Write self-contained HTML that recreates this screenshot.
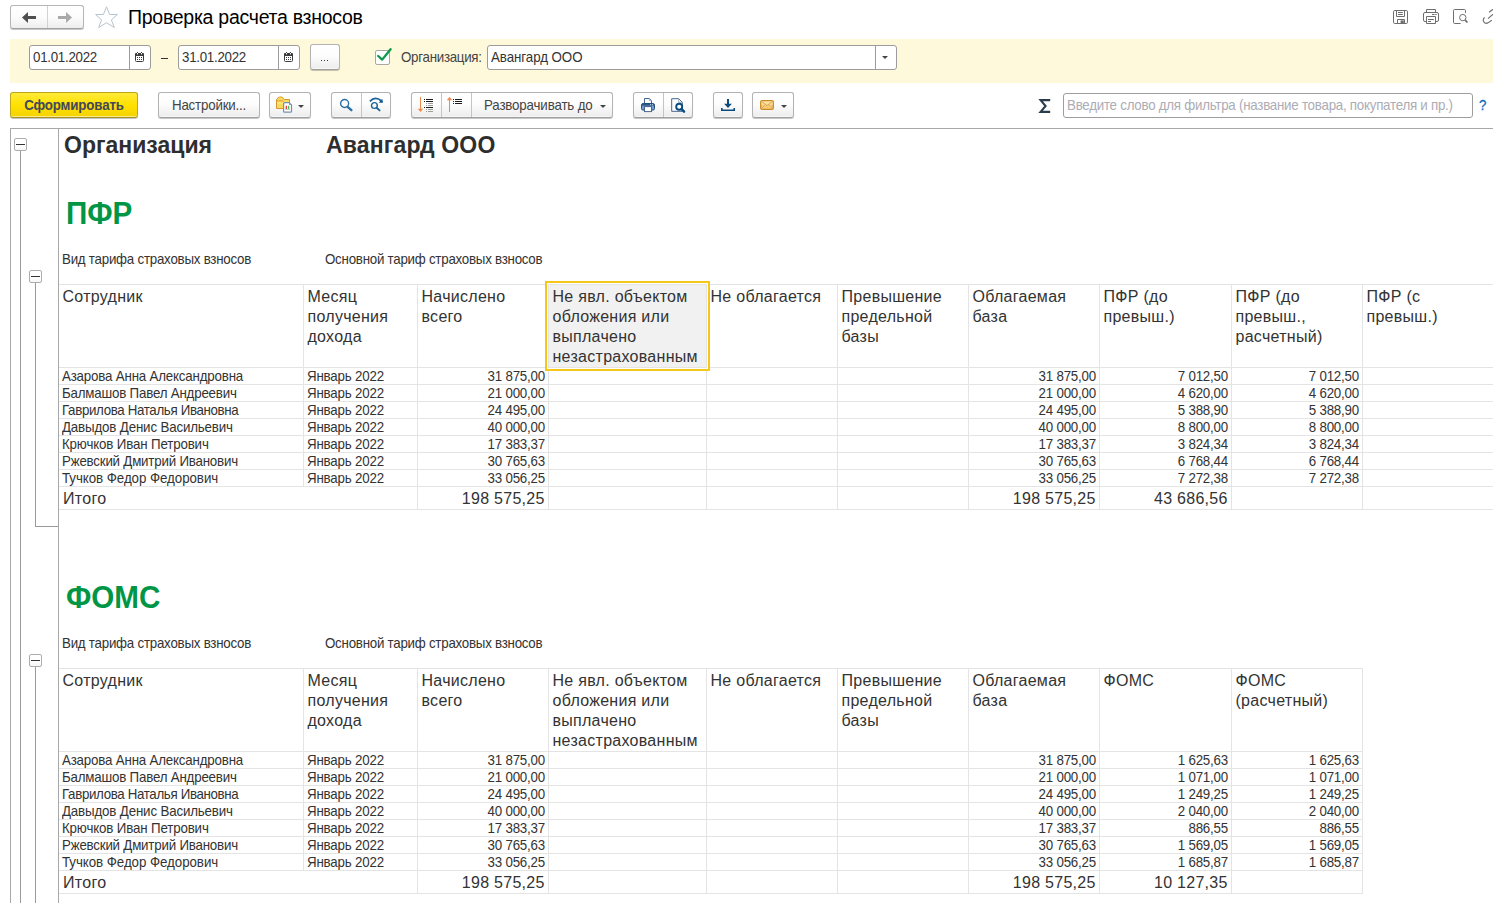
<!DOCTYPE html>
<html lang="ru"><head><meta charset="utf-8"><title>Проверка расчета взносов</title>
<style>

*{box-sizing:border-box}
html,body{margin:0;padding:0;background:#fff}
html{overflow:hidden;width:1493px;height:903px}
body{width:1493px;height:903px;overflow:hidden;position:relative;font-family:"Liberation Sans",sans-serif;font-size:13px;color:#333;}
.abs{position:absolute}
.t{position:absolute;white-space:nowrap;line-height:1}
.btn{position:absolute;top:92px;height:26px;border:1px solid #b3b3b3;border-bottom-color:#9f9f9f;border-radius:3px;background:linear-gradient(#ffffff 0%,#fdfdfd 45%,#ececec 100%);box-shadow:0 1px 0 rgba(0,0,0,.14),0 1px 1px rgba(0,0,0,.1),inset 0 -1px 0 rgba(255,255,255,.55)}
.btn .dv{position:absolute;top:0;bottom:0;width:1px;background:#c4c4c4}
.inp{position:absolute;border:1px solid #9c9c9c;border-radius:3px;background:#fff}
.inp .dv{position:absolute;top:0;bottom:0;width:1px;background:#9c9c9c}
.caret{position:absolute;width:0;height:0;border-left:3px solid transparent;border-right:3px solid transparent;border-top:3px solid #444}
.vl{position:absolute;width:1px;background:#e4e4e4}
.hl{position:absolute;height:1px;background:#e4e4e4}
.tl{position:absolute;background:#9a9a9a}
.box{position:absolute;width:13px;height:13px;border:1px solid #adadad;border-radius:2px;background:linear-gradient(#fff 55%,#f6f6f6)}
.box i{position:absolute;left:1px;top:5px;width:9px;height:1px;background:#333}
.h{position:absolute;font-size:16px;line-height:20px;letter-spacing:.28px;color:#333;white-space:nowrap}
.d{position:absolute;font-size:13.33px;line-height:13px;letter-spacing:-.2px;color:#333;white-space:nowrap;transform:scaleY(1.05);transform-origin:0 0}
.y{transform:scaleY(1.05);transform-origin:0 0}
.n{letter-spacing:-.17px}
.m{letter-spacing:-.22px}
.r{text-align:right}
.s{position:absolute;font-size:16px;line-height:16px;letter-spacing:.28px;color:#333;white-space:nowrap}
svg{position:absolute;overflow:visible}

</style></head><body>
<div class="abs" style="left:10px;top:5px;width:74px;height:24px;border:1px solid #b6b6b6;border-bottom-color:#a2a2a2;border-radius:3px;background:linear-gradient(#fff 0%,#fcfcfc 50%,#eeeeee 100%);box-shadow:0 1px 0 rgba(0,0,0,.14),0 1px 1px rgba(0,0,0,.1)"><div class="abs" style="left:36px;top:0;bottom:0;width:1px;background:#d2d2d2"></div></div>
<svg style="left:22px;top:12px" width="14" height="11" viewBox="0 0 14 11"><path d="M0 5.5 L6 0 L6 4 L14 4 L14 7 L6 7 L6 11 Z" fill="#4f4f4f"/></svg>
<svg style="left:58px;top:12px" width="14" height="11" viewBox="0 0 14 11"><path d="M14 5.5 L8 0 L8 4 L0 4 L0 7 L8 7 L8 11 Z" fill="#a9a9a9"/></svg>
<svg style="left:94px;top:6px" width="25" height="23" viewBox="0 0 25 23"><path d="M12.5 0.8 L15.6 8.5 L23.4 8.5 L17.4 13.9 L20.3 21.5 L12.5 16.7 L4.7 21.5 L7.6 13.9 L1.6 8.5 L9.4 8.5 Z" fill="#fff" stroke="#b9c3cb" stroke-width="1" stroke-linejoin="miter"/></svg>
<div class="t" style="left:128px;top:8px;font-size:19.5px;letter-spacing:-.27px;color:#000">Проверка расчета взносов</div>
<svg style="left:1393px;top:10px" width="15" height="14" viewBox="0 0 15 14" fill="none" stroke="#6e6e6e" stroke-width="1">
<path d="M1.8 0.5 H13.2 Q14.5 0.5 14.5 1.8 V12.2 Q14.5 13.5 13.2 13.5 H1.8 Q0.5 13.5 0.5 12.2 V1.8 Q0.5 0.5 1.8 0.5 Z"/>
<path d="M3.5 0.5 V6.5 H11.5 V0.5"/><path d="M5 2.5 H9.8 M5 4.5 H9.8"/>
<path d="M4.5 13.5 V9.5 H11.5 V13.5"/><rect x="7.6" y="10.4" width="3.2" height="2.8" fill="#6e6e6e" stroke="none"/></svg>
<svg style="left:1423px;top:9px" width="16" height="15" viewBox="0 0 16 15" fill="none" stroke="#6e6e6e" stroke-width="1">
<path d="M3.5 3.5 V0.5 H12.5 V3.5"/>
<path d="M3.5 12.5 H2 Q0.5 12.5 0.5 11 V5 Q0.5 3.5 2 3.5 H14 Q15.5 3.5 15.5 5 V11 Q15.5 12.5 14 12.5 H12.5"/>
<path d="M3.5 7.5 H12.5 V14.5 H3.5 Z"/><path d="M5 10.5 H10.8 M5 12.5 H8 M9 5.5 H11.6 M12.3 5.5 H13.7"/></svg>
<svg style="left:1453px;top:9px" width="16" height="15" viewBox="0 0 16 15" fill="none" stroke="#6e6e6e" stroke-width="1">
<path d="M12.5 3.9 V1.7 Q12.5 0.5 11.3 0.5 H1.7 Q0.5 0.5 0.5 1.7 V13.3 Q0.5 14.5 1.7 14.5 H7.6"/>
<circle cx="9.8" cy="8.6" r="3.2"/><path d="M12.2 11.2 L14.4 13.5" stroke-width="1.8"/></svg>
<svg style="left:1482px;top:9px;overflow:hidden" width="11" height="15" viewBox="0 0 11 15" fill="none" stroke="#6e6e6e" stroke-width="1.15">
<path d="M2.6 8.4 Q0.4 10.6 1.8 12.8 Q3.6 15.4 6.4 13.6 L9.8 11.2"/><path d="M6 9.6 L11 5.3"/><path d="M7.2 3.2 L11 0.2"/></svg>
<div class="abs" style="left:10px;top:39px;width:1483px;height:44px;background:#fff9db"></div>
<div class="inp" style="left:29px;top:45px;width:122px;height:25px"><div class="dv" style="left:99px"></div></div>
<div class="t y" style="left:33px;top:50px;font-size:13.33px;letter-spacing:-.27px;color:#333">01.01.2022</div>
<svg style="left:135px;top:52px" width="9" height="10" viewBox="0 0 9 10"><rect x="0.5" y="1.5" width="8" height="8" rx="1" fill="#fff" stroke="#3c3c3c" stroke-width="1"/><path d="M0 2.2 Q0 1 1.2 1 H7.8 Q9 1 9 2.2 V4 H0 Z" fill="#3c3c3c"/><rect x="2" y="0" width="1" height="1" fill="#3c3c3c"/><rect x="6" y="0" width="1" height="1" fill="#3c3c3c"/><rect x="2" y="1" width="1" height="1.4" fill="#fff"/><rect x="6" y="1" width="1" height="1.4" fill="#fff"/><g fill="#3c3c3c"><rect x="2" y="5" width="1" height="1"/><rect x="4" y="5" width="1" height="1"/><rect x="6" y="5" width="1" height="1"/><rect x="2" y="7" width="1" height="1"/><rect x="4" y="7" width="1" height="1"/><rect x="6" y="7" width="1" height="1"/></g></svg>
<div class="abs" style="left:161px;top:58px;width:7px;height:1px;background:#333"></div>
<div class="inp" style="left:178px;top:45px;width:122px;height:25px"><div class="dv" style="left:99px"></div></div>
<div class="t y" style="left:182px;top:50px;font-size:13.33px;letter-spacing:-.27px;color:#333">31.01.2022</div>
<svg style="left:284px;top:52px" width="9" height="10" viewBox="0 0 9 10"><rect x="0.5" y="1.5" width="8" height="8" rx="1" fill="#fff" stroke="#3c3c3c" stroke-width="1"/><path d="M0 2.2 Q0 1 1.2 1 H7.8 Q9 1 9 2.2 V4 H0 Z" fill="#3c3c3c"/><rect x="2" y="0" width="1" height="1" fill="#3c3c3c"/><rect x="6" y="0" width="1" height="1" fill="#3c3c3c"/><rect x="2" y="1" width="1" height="1.4" fill="#fff"/><rect x="6" y="1" width="1" height="1.4" fill="#fff"/><g fill="#3c3c3c"><rect x="2" y="5" width="1" height="1"/><rect x="4" y="5" width="1" height="1"/><rect x="6" y="5" width="1" height="1"/><rect x="2" y="7" width="1" height="1"/><rect x="4" y="7" width="1" height="1"/><rect x="6" y="7" width="1" height="1"/></g></svg>
<div class="abs" style="left:310px;top:44px;width:30px;height:26px;border:1px solid #b3b3b3;border-bottom-color:#9f9f9f;border-radius:3px;background:linear-gradient(#fff 0%,#fdfdfd 45%,#ececec 100%);box-shadow:0 1px 0 rgba(0,0,0,.14),0 1px 1px rgba(0,0,0,.1),inset 0 -1px 0 rgba(255,255,255,.55)"></div>
<div class="abs" style="left:321px;top:60px;width:1px;height:1px;background:#333;box-shadow:3px 0 0 #333,6px 0 0 #333"></div>
<div class="abs" style="left:375px;top:50px;width:15px;height:15px;border:1px solid #a9a9a9;border-radius:2px;background:#fff"></div>
<svg style="left:377px;top:48px" width="15" height="14" viewBox="0 0 15 14"><path d="M1.2 8 L5.2 11.6 L13.6 1.2" fill="none" stroke="#0a9a47" stroke-width="2.3" stroke-linecap="round" stroke-linejoin="round"/></svg>
<div class="t y" style="left:401px;top:50px;font-size:13.33px;color:#444;letter-spacing:-.28px">Организация:</div>
<div class="inp" style="left:487px;top:45px;width:410px;height:25px"><div class="dv" style="left:387px"></div></div>
<div class="t y" style="left:491px;top:50px;font-size:13.33px;letter-spacing:-.07px;color:#333">Авангард ООО</div>
<div class="caret" style="left:882px;top:56px"></div>
<div class="btn" style="left:10px;width:128px;border-color:#bda51c;border-bottom-color:#a8911a;background:linear-gradient(#ffea3a 0%,#ffe100 50%,#f4d200 100%)"></div>
<div class="t y" style="left:10px;width:128px;text-align:center;top:98px;font-size:13.33px;letter-spacing:-.15px;font-weight:700;color:#43475a">Сформировать</div>
<div class="btn" style="left:158px;width:102px"></div>
<div class="t y" style="left:158px;width:102px;text-align:center;top:98px;font-size:13.33px;letter-spacing:-.2px;color:#444">Настройки...</div>
<div class="btn" style="left:269px;width:42px"></div>
<svg style="left:276px;top:96px" width="17" height="17" viewBox="0 0 17 17">
<path d="M0.5 12.5 V3.8 L2.2 1.6 Q3.3 0.9 4.4 1 L5.8 1 Q6.9 1.3 7.5 2.6 L8.2 3.5 H13.5 V12.5 Z" fill="#fad95f" stroke="#d9972b" stroke-width="1"/>
<path d="M1.2 5.6 H7.2 V8.4 H1.2 Z" fill="#ffe878" opacity=".7"/>
<path d="M0.6 4.9 H7.4" stroke="#d9972b" stroke-width=".9" fill="none"/>
<path d="M8.6 6.6 H13.2 L15.5 8.9 V15.2 Q15.5 16.2 14.5 16.2 H8.6 Q7.6 16.2 7.6 15.2 V7.6 Q7.6 6.6 8.6 6.6 Z" fill="#fff" stroke="#7790a8" stroke-width="1.2"/>
<path d="M13.1 6.8 V9 H15.3 Z" fill="#7790a8"/>
<rect x="9.7" y="9.8" width="1.3" height="3.3" fill="#ef3b32"/><rect x="12" y="9.8" width="1.2" height="3.3" fill="#3dbb52"/><path d="M9 13.4 H14" stroke="#9a9a9a" stroke-width=".5"/></svg>
<div class="caret" style="left:298px;top:105px"></div>
<div class="btn" style="left:331px;width:60px"><div class="dv" style="left:29px"></div></div>
<svg style="left:339px;top:98px" width="14" height="14" viewBox="0 0 14 14" fill="none" stroke="#2a70a2"><circle cx="5.6" cy="5.5" r="4" stroke-width="1.4"/><path d="M8.6 8.8 L12.4 12.2" stroke-width="2.3" stroke-linecap="round"/></svg>
<svg style="left:369px;top:97px" width="16" height="16" viewBox="0 0 16 16" fill="none" stroke="#1b659b"><circle cx="5.4" cy="8.5" r="2.9" stroke-width="1.4"/><path d="M7.6 10.7 L10.6 13.4" stroke-width="1.9" stroke-linecap="round"/><path d="M0.9 4.4 Q6 -1.4 12.6 4" stroke-width="1.7"/><path d="M13.2 1.7 L14.1 5.8 L9.7 5.8 Z" fill="#0f5a92" stroke="none"/></svg>
<div class="btn" style="left:411px;width:202px"><div class="dv" style="left:29px"></div><div class="dv" style="left:59px"></div></div>
<svg style="left:417px;top:96px" width="17" height="17" viewBox="0 0 17 17"><rect x="3" y="1" width="1" height="13" fill="#f08a4b" shape-rendering="crispEdges"/><path d="M0.8 12.7 H6.2 L3.5 16.1 Z" fill="#f08a4b"/>
<g shape-rendering="crispEdges" fill="#1c1c1c"><rect x="7" y="3" width="1" height="1"/><rect x="9" y="3" width="7" height="1"/><rect x="7" y="5" width="1" height="1"/><rect x="9" y="5" width="7" height="1"/><rect x="7" y="11" width="1" height="1"/><rect x="9" y="11" width="7" height="1"/></g>
<g shape-rendering="crispEdges" fill="#9c9c9c"><rect x="9" y="7" width="1" height="1"/><rect x="11" y="7" width="5" height="1"/><rect x="9" y="9" width="1" height="1"/><rect x="11" y="9" width="5" height="1"/><rect x="9" y="13" width="1" height="1"/><rect x="11" y="13" width="5" height="1"/><rect x="9" y="15" width="1" height="1"/><rect x="11" y="15" width="5" height="1"/></g></svg>
<svg style="left:446px;top:96px" width="17" height="17" viewBox="0 0 17 17"><rect x="3" y="3" width="1" height="13" fill="#f08a4b" shape-rendering="crispEdges"/><path d="M0.8 4.2 H6.2 L3.5 0.8 Z" fill="#f08a4b"/>
<g shape-rendering="crispEdges" fill="#1c1c1c"><rect x="7" y="3" width="1" height="1"/><rect x="9" y="3" width="7" height="1"/><rect x="7" y="5" width="1" height="1"/><rect x="9" y="5" width="7" height="1"/><rect x="7" y="7" width="1" height="1"/><rect x="9" y="7" width="7" height="1"/></g></svg>
<div class="t y" style="left:484px;top:98px;font-size:13.33px;letter-spacing:-.16px;color:#444">Разворачивать до</div>
<div class="caret" style="left:600px;top:105px"></div>
<div class="btn" style="left:633px;width:60px"><div class="dv" style="left:29px"></div></div>
<svg style="left:640px;top:97px" width="16" height="16" viewBox="0 0 16 16"><path d="M4.5 6.5 V1.5 H9.3 L11.5 3.7 V6.5" fill="#fff" stroke="#46648a" stroke-width="1"/><path d="M9.3 1.5 V3.7 H11.5" fill="none" stroke="#8aa0bb" stroke-width=".8"/>
<rect x="1.5" y="6.5" width="13" height="6.6" rx="1.6" fill="#739dcd" stroke="#1f4e7c" stroke-width="1"/><rect x="2" y="7" width="12" height="1.7" fill="#2d5788"/><rect x="10.2" y="7.3" width=".9" height=".9" fill="#fff"/><rect x="12.1" y="7.3" width=".9" height=".9" fill="#fff"/>
<rect x="4.5" y="9.6" width="7" height="5" fill="#fff" stroke="#46648a" stroke-width="1"/></svg>
<svg style="left:670px;top:97px" width="16" height="16" viewBox="0 0 16 16"><path d="M1.7 1.7 H8.7 L12.3 5.3 V14.3 H1.7 Z" fill="#fff" stroke="#46648a" stroke-width="1"/><path d="M8.7 1.7 V5.3 H12.3" fill="none" stroke="#8aa0bb" stroke-width=".8"/><circle cx="9.2" cy="9.7" r="3" fill="#fff" stroke="#0a4c7f" stroke-width="1.9"/><path d="M11.5 12.1 L14.1 14.7" stroke="#0a4c7f" stroke-width="2.4" stroke-linecap="round"/></svg>
<div class="btn" style="left:713px;width:30px"></div>
<svg style="left:721px;top:98px" width="15" height="14" viewBox="0 0 15 14"><rect x="6" y="1" width="2" height="5.4" fill="#0a4a7c"/><path d="M3.1 5.8 H10.9 L7 10 Z" fill="#0a4a7c"/><path d="M0.85 10 V12.3 H13.25 V10" fill="none" stroke="#0a4a7c" stroke-width="1.6"/></svg>
<div class="btn" style="left:752px;width:42px"></div>
<svg style="left:760px;top:100px" width="14" height="10" viewBox="0 0 14 10"><rect x="0.7" y="0.7" width="12.6" height="8.6" rx="1.4" fill="#f5cb78" stroke="#c98a26" stroke-width="1.3"/><rect x="1.4" y="1.4" width="11.2" height="3.4" fill="#fbe3a6" opacity=".8"/><path d="M1.4 1.4 L7 5.6 L12.6 1.4" fill="none" stroke="#d9a04a" stroke-width=".9"/><path d="M1.4 8.6 L5.4 4.6 M12.6 8.6 L8.6 4.6" fill="none" stroke="#dba552" stroke-width=".8"/></svg>
<div class="caret" style="left:781px;top:105px"></div>
<svg style="left:1039px;top:99px" width="12" height="14" viewBox="0 0 12 14"><path d="M11.2 1.1 H1.6 L6.6 7 L1.6 12.9 H11.2" fill="none" stroke="#2b3d4d" stroke-width="2.1" stroke-linejoin="miter"/></svg>
<div class="inp" style="left:1063px;top:93px;width:410px;height:25px;border-color:#9d9d9d;border-radius:3px"></div>
<div class="t y" style="left:1067px;top:98px;font-size:13.33px;color:#acacb5;letter-spacing:-.25px">Введите слово для фильтра (название товара, покупателя и пр.)</div>
<div class="t y" style="left:1479px;top:98px;font-size:13.33px;font-weight:400;-webkit-text-stroke:.25px #0c6cbc;color:#0c6cbc">?</div>
<div class="tl" style="left:10px;top:128px;width:1483px;height:1px;background:#a8a8a8"></div>
<div class="tl" style="left:10px;top:128px;width:1px;height:775px;background:#a8a8a8"></div>
<div class="tl" style="left:58px;top:129px;width:1px;height:774px;background:#a8a8a8"></div>
<div class="tl" style="left:20px;top:151px;width:1px;height:752px"></div>
<div class="box" style="left:14px;top:138px"><i></i></div>
<div class="tl" style="left:35px;top:283px;width:1px;height:244px"></div>
<div class="tl" style="left:35px;top:526px;width:23px;height:1px"></div>
<div class="box" style="left:29px;top:270px"><i></i></div>
<div class="tl" style="left:35px;top:667px;width:1px;height:236px"></div>
<div class="box" style="left:29px;top:654px"><i></i></div>
<div class="t" style="left:64px;top:134px;font-size:23px;font-weight:700;color:#2e2e2e">Организация</div>
<div class="t" style="left:326px;top:134px;font-size:23px;font-weight:700;color:#2e2e2e;letter-spacing:.15px">Авангард ООО</div>
<div class="t" style="left:65.7px;top:198px;font-size:30.67px;transform:scaleX(.967);transform-origin:0 0;font-weight:700;color:#009646">ПФР</div>
<div class="d" style="left:62px;top:252px;letter-spacing:-.24px">Вид тарифа страховых взносов</div>
<div class="d" style="left:325px;top:252px;letter-spacing:-.25px">Основной тариф страховых взносов</div>
<div class="hl" style="left:59px;top:284px;width:1434px"></div>
<div class="hl" style="left:59px;top:367px;width:1434px"></div>
<div class="hl" style="left:59px;top:384px;width:1434px"></div>
<div class="hl" style="left:59px;top:401px;width:1434px"></div>
<div class="hl" style="left:59px;top:418px;width:1434px"></div>
<div class="hl" style="left:59px;top:435px;width:1434px"></div>
<div class="hl" style="left:59px;top:452px;width:1434px"></div>
<div class="hl" style="left:59px;top:469px;width:1434px"></div>
<div class="hl" style="left:59px;top:486px;width:1434px"></div>
<div class="hl" style="left:59px;top:509px;width:1434px"></div>
<div class="vl" style="left:303px;top:284px;height:202px"></div>
<div class="vl" style="left:417px;top:284px;height:226px"></div>
<div class="vl" style="left:548px;top:284px;height:226px"></div>
<div class="vl" style="left:706px;top:284px;height:226px"></div>
<div class="vl" style="left:837px;top:284px;height:226px"></div>
<div class="vl" style="left:968px;top:284px;height:226px"></div>
<div class="vl" style="left:1099px;top:284px;height:226px"></div>
<div class="vl" style="left:1231px;top:284px;height:226px"></div>
<div class="vl" style="left:1362px;top:284px;height:226px"></div>
<div class="abs" style="left:545px;top:281px;width:165px;height:90px;border:2px solid #f7c61a;background:#fff"></div>
<div class="abs" style="left:548px;top:284px;width:159px;height:84px;background:#f1f1f1;border:1px solid #e4e4e4"></div>
<div class="h" style="left:62.5px;top:287px">Сотрудник</div>
<div class="h" style="left:307.5px;top:287px">Месяц<br>получения<br>дохода</div>
<div class="h" style="left:421.5px;top:287px">Начислено<br>всего</div>
<div class="h" style="left:552.5px;top:287px">Не явл. объектом<br>обложения или<br>выплачено<br>незастрахованным</div>
<div class="h" style="left:710.5px;top:287px">Не облагается</div>
<div class="h" style="left:841.5px;top:287px">Превышение<br>предельной<br>базы</div>
<div class="h" style="left:972.5px;top:287px">Облагаемая<br>база</div>
<div class="h" style="left:1103.5px;top:287px">ПФР (до<br>превыш.)</div>
<div class="h" style="left:1235.5px;top:287px">ПФР (до<br>превыш.,<br>расчетный)</div>
<div class="h" style="left:1366.5px;top:287px">ПФР (с<br>превыш.)</div>
<div class="d" style="left:62px;top:369px;letter-spacing:-0.19px">Азарова Анна Александровна</div>
<div class="d" style="left:307px;top:369px">Январь 2022</div>
<div class="d r" style="left:417px;width:128px;top:369px">31 875,00</div>
<div class="d r" style="left:968px;width:128px;top:369px">31 875,00</div>
<div class="d r" style="left:1099px;width:129px;top:369px">7 012,50</div>
<div class="d r" style="left:1231px;width:128px;top:369px">7 012,50</div>
<div class="d" style="left:62px;top:386px;letter-spacing:-0.2px">Балмашов Павел Андреевич</div>
<div class="d" style="left:307px;top:386px">Январь 2022</div>
<div class="d r" style="left:417px;width:128px;top:386px">21 000,00</div>
<div class="d r" style="left:968px;width:128px;top:386px">21 000,00</div>
<div class="d r" style="left:1099px;width:129px;top:386px">4 620,00</div>
<div class="d r" style="left:1231px;width:128px;top:386px">4 620,00</div>
<div class="d" style="left:62px;top:403px;letter-spacing:-0.35px">Гаврилова Наталья Ивановна</div>
<div class="d" style="left:307px;top:403px">Январь 2022</div>
<div class="d r" style="left:417px;width:128px;top:403px">24 495,00</div>
<div class="d r" style="left:968px;width:128px;top:403px">24 495,00</div>
<div class="d r" style="left:1099px;width:129px;top:403px">5 388,90</div>
<div class="d r" style="left:1231px;width:128px;top:403px">5 388,90</div>
<div class="d" style="left:62px;top:420px;letter-spacing:-0.16px">Давыдов Денис Васильевич</div>
<div class="d" style="left:307px;top:420px">Январь 2022</div>
<div class="d r" style="left:417px;width:128px;top:420px">40 000,00</div>
<div class="d r" style="left:968px;width:128px;top:420px">40 000,00</div>
<div class="d r" style="left:1099px;width:129px;top:420px">8 800,00</div>
<div class="d r" style="left:1231px;width:128px;top:420px">8 800,00</div>
<div class="d" style="left:62px;top:437px;letter-spacing:-0.155px">Крючков Иван Петрович</div>
<div class="d" style="left:307px;top:437px">Январь 2022</div>
<div class="d r" style="left:417px;width:128px;top:437px">17 383,37</div>
<div class="d r" style="left:968px;width:128px;top:437px">17 383,37</div>
<div class="d r" style="left:1099px;width:129px;top:437px">3 824,34</div>
<div class="d r" style="left:1231px;width:128px;top:437px">3 824,34</div>
<div class="d" style="left:62px;top:454px;letter-spacing:-0.21px">Ржевский Дмитрий Иванович</div>
<div class="d" style="left:307px;top:454px">Январь 2022</div>
<div class="d r" style="left:417px;width:128px;top:454px">30 765,63</div>
<div class="d r" style="left:968px;width:128px;top:454px">30 765,63</div>
<div class="d r" style="left:1099px;width:129px;top:454px">6 768,44</div>
<div class="d r" style="left:1231px;width:128px;top:454px">6 768,44</div>
<div class="d" style="left:62px;top:471px;letter-spacing:-0.06px">Тучков Федор Федорович</div>
<div class="d" style="left:307px;top:471px">Январь 2022</div>
<div class="d r" style="left:417px;width:128px;top:471px">33 056,25</div>
<div class="d r" style="left:968px;width:128px;top:471px">33 056,25</div>
<div class="d r" style="left:1099px;width:129px;top:471px">7 272,38</div>
<div class="d r" style="left:1231px;width:128px;top:471px">7 272,38</div>
<div class="s" style="left:63px;top:491px;letter-spacing:.28px">Итого</div>
<div class="s r" style="left:417px;width:127.7px;top:491px">198 575,25</div>
<div class="s r" style="left:968px;width:127.7px;top:491px">198 575,25</div>
<div class="s r" style="left:1099px;width:128.7px;top:491px">43 686,56</div>
<div class="t" style="left:65.7px;top:582px;font-size:30.67px;transform:scaleX(.967);transform-origin:0 0;font-weight:700;color:#009646">ФОМС</div>
<div class="d" style="left:62px;top:636px;letter-spacing:-.24px">Вид тарифа страховых взносов</div>
<div class="d" style="left:325px;top:636px;letter-spacing:-.25px">Основной тариф страховых взносов</div>
<div class="hl" style="left:59px;top:668px;width:1304px"></div>
<div class="hl" style="left:59px;top:751px;width:1304px"></div>
<div class="hl" style="left:59px;top:768px;width:1304px"></div>
<div class="hl" style="left:59px;top:785px;width:1304px"></div>
<div class="hl" style="left:59px;top:802px;width:1304px"></div>
<div class="hl" style="left:59px;top:819px;width:1304px"></div>
<div class="hl" style="left:59px;top:836px;width:1304px"></div>
<div class="hl" style="left:59px;top:853px;width:1304px"></div>
<div class="hl" style="left:59px;top:870px;width:1304px"></div>
<div class="hl" style="left:59px;top:893px;width:1304px"></div>
<div class="vl" style="left:303px;top:668px;height:202px"></div>
<div class="vl" style="left:417px;top:668px;height:226px"></div>
<div class="vl" style="left:548px;top:668px;height:226px"></div>
<div class="vl" style="left:706px;top:668px;height:226px"></div>
<div class="vl" style="left:837px;top:668px;height:226px"></div>
<div class="vl" style="left:968px;top:668px;height:226px"></div>
<div class="vl" style="left:1099px;top:668px;height:226px"></div>
<div class="vl" style="left:1231px;top:668px;height:226px"></div>
<div class="vl" style="left:1362px;top:668px;height:226px"></div>
<div class="h" style="left:62.5px;top:671px">Сотрудник</div>
<div class="h" style="left:307.5px;top:671px">Месяц<br>получения<br>дохода</div>
<div class="h" style="left:421.5px;top:671px">Начислено<br>всего</div>
<div class="h" style="left:552.5px;top:671px">Не явл. объектом<br>обложения или<br>выплачено<br>незастрахованным</div>
<div class="h" style="left:710.5px;top:671px">Не облагается</div>
<div class="h" style="left:841.5px;top:671px">Превышение<br>предельной<br>базы</div>
<div class="h" style="left:972.5px;top:671px">Облагаемая<br>база</div>
<div class="h" style="left:1103.5px;top:671px">ФОМС</div>
<div class="h" style="left:1235.5px;top:671px">ФОМС<br>(расчетный)</div>
<div class="d" style="left:62px;top:753px;letter-spacing:-0.19px">Азарова Анна Александровна</div>
<div class="d" style="left:307px;top:753px">Январь 2022</div>
<div class="d r" style="left:417px;width:128px;top:753px">31 875,00</div>
<div class="d r" style="left:968px;width:128px;top:753px">31 875,00</div>
<div class="d r" style="left:1099px;width:129px;top:753px">1 625,63</div>
<div class="d r" style="left:1231px;width:128px;top:753px">1 625,63</div>
<div class="d" style="left:62px;top:770px;letter-spacing:-0.2px">Балмашов Павел Андреевич</div>
<div class="d" style="left:307px;top:770px">Январь 2022</div>
<div class="d r" style="left:417px;width:128px;top:770px">21 000,00</div>
<div class="d r" style="left:968px;width:128px;top:770px">21 000,00</div>
<div class="d r" style="left:1099px;width:129px;top:770px">1 071,00</div>
<div class="d r" style="left:1231px;width:128px;top:770px">1 071,00</div>
<div class="d" style="left:62px;top:787px;letter-spacing:-0.35px">Гаврилова Наталья Ивановна</div>
<div class="d" style="left:307px;top:787px">Январь 2022</div>
<div class="d r" style="left:417px;width:128px;top:787px">24 495,00</div>
<div class="d r" style="left:968px;width:128px;top:787px">24 495,00</div>
<div class="d r" style="left:1099px;width:129px;top:787px">1 249,25</div>
<div class="d r" style="left:1231px;width:128px;top:787px">1 249,25</div>
<div class="d" style="left:62px;top:804px;letter-spacing:-0.16px">Давыдов Денис Васильевич</div>
<div class="d" style="left:307px;top:804px">Январь 2022</div>
<div class="d r" style="left:417px;width:128px;top:804px">40 000,00</div>
<div class="d r" style="left:968px;width:128px;top:804px">40 000,00</div>
<div class="d r" style="left:1099px;width:129px;top:804px">2 040,00</div>
<div class="d r" style="left:1231px;width:128px;top:804px">2 040,00</div>
<div class="d" style="left:62px;top:821px;letter-spacing:-0.155px">Крючков Иван Петрович</div>
<div class="d" style="left:307px;top:821px">Январь 2022</div>
<div class="d r" style="left:417px;width:128px;top:821px">17 383,37</div>
<div class="d r" style="left:968px;width:128px;top:821px">17 383,37</div>
<div class="d r" style="left:1099px;width:129px;top:821px">886,55</div>
<div class="d r" style="left:1231px;width:128px;top:821px">886,55</div>
<div class="d" style="left:62px;top:838px;letter-spacing:-0.21px">Ржевский Дмитрий Иванович</div>
<div class="d" style="left:307px;top:838px">Январь 2022</div>
<div class="d r" style="left:417px;width:128px;top:838px">30 765,63</div>
<div class="d r" style="left:968px;width:128px;top:838px">30 765,63</div>
<div class="d r" style="left:1099px;width:129px;top:838px">1 569,05</div>
<div class="d r" style="left:1231px;width:128px;top:838px">1 569,05</div>
<div class="d" style="left:62px;top:855px;letter-spacing:-0.06px">Тучков Федор Федорович</div>
<div class="d" style="left:307px;top:855px">Январь 2022</div>
<div class="d r" style="left:417px;width:128px;top:855px">33 056,25</div>
<div class="d r" style="left:968px;width:128px;top:855px">33 056,25</div>
<div class="d r" style="left:1099px;width:129px;top:855px">1 685,87</div>
<div class="d r" style="left:1231px;width:128px;top:855px">1 685,87</div>
<div class="s" style="left:63px;top:875px;letter-spacing:.28px">Итого</div>
<div class="s r" style="left:417px;width:127.7px;top:875px">198 575,25</div>
<div class="s r" style="left:968px;width:127.7px;top:875px">198 575,25</div>
<div class="s r" style="left:1099px;width:128.7px;top:875px">10 127,35</div>
</body></html>
